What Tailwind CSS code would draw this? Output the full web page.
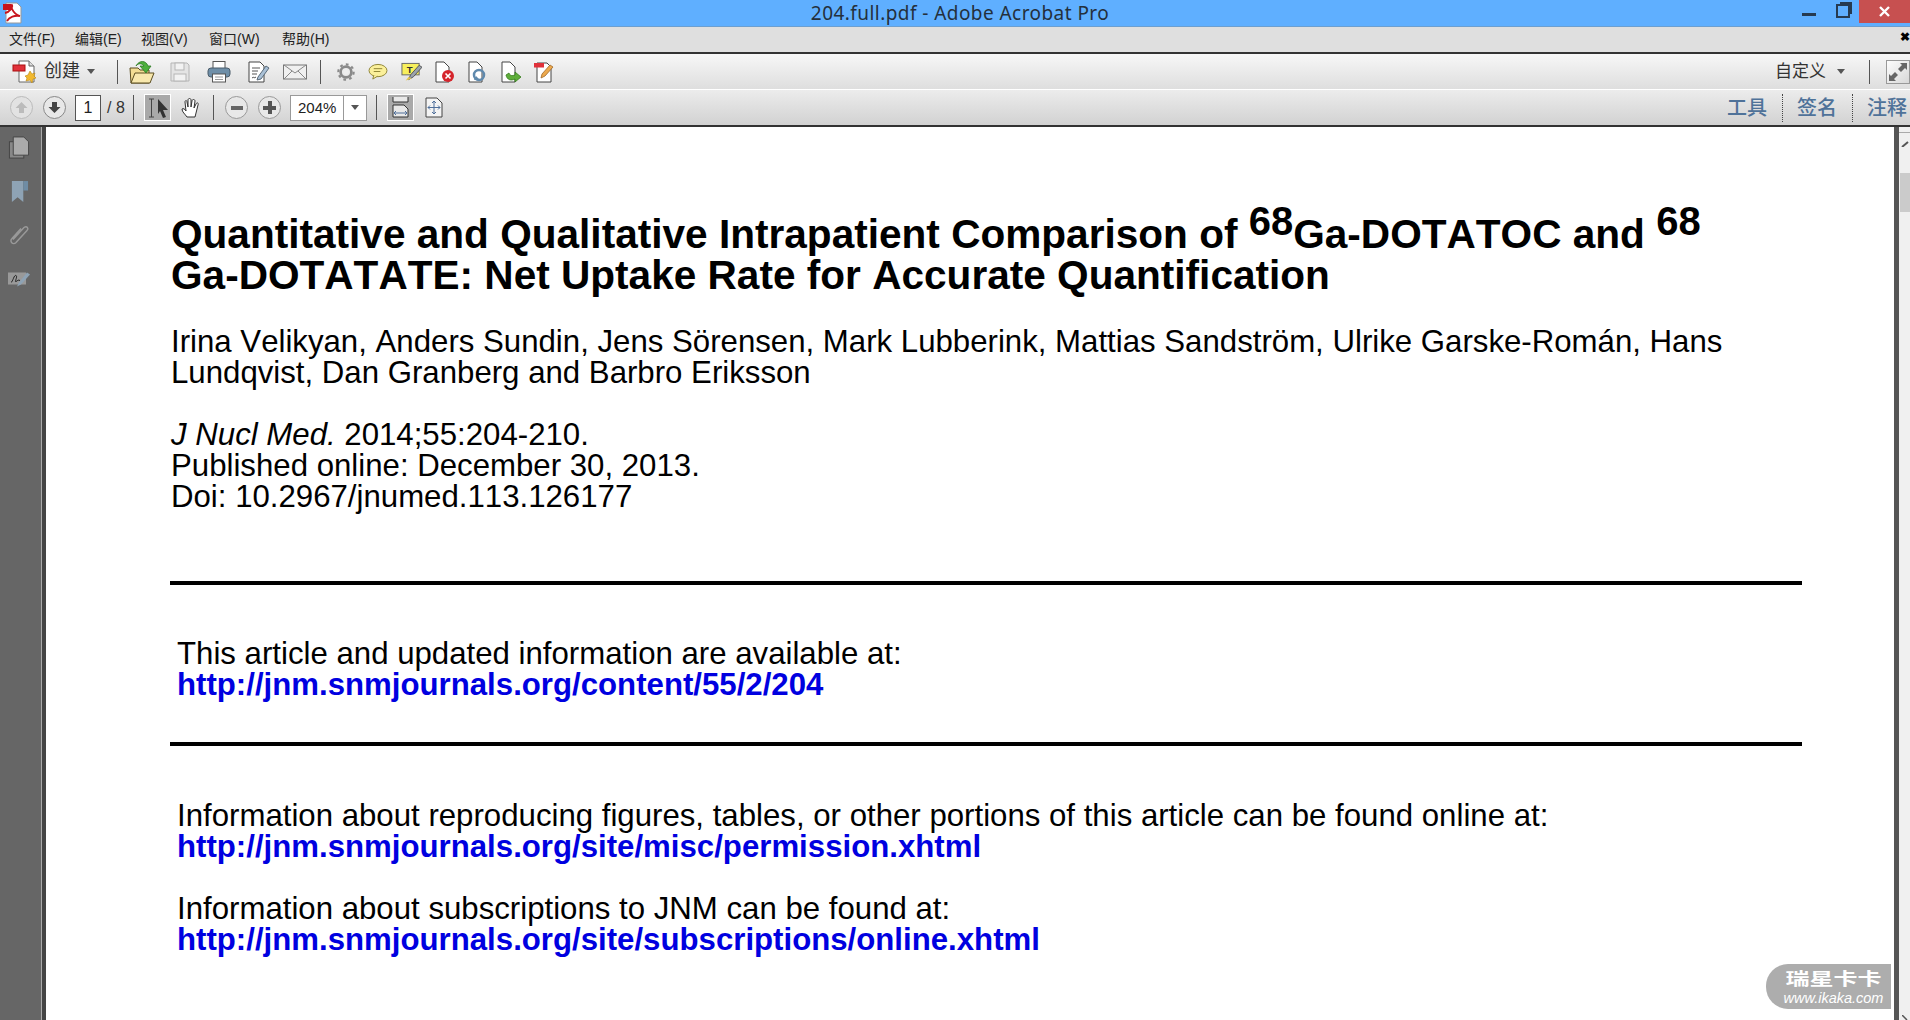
<!DOCTYPE html>
<html lang="zh-CN">
<head>
<meta charset="UTF-8">
<title>204.full.pdf - Adobe Acrobat Pro</title>
<script src="https://cdn.jsdelivr.net/npm/@tailwindcss/browser@4"></script>
</head>
<body class="w-[1910px] h-[1020px] overflow-hidden relative bg-white font-['Liberation_Sans','Noto_Sans_CJK_SC',sans-serif]">

<!-- title bar -->
<div class="h-[27px] bg-[#5fafff] border-b border-[#6c9fd0] flex items-center relative">
  <svg class="ml-[2px] w-[22px] h-[22px]" viewBox="0 0 22 22"><path d="M4 1h11l4 4v16H4z" fill="#fff" stroke="#999"/><path d="M3 11c5-1 8-6 7-8-2-1 0 9 8 11-5-1-11 1-13 5" fill="none" stroke="#c8141c" stroke-width="1.800"/><rect x="1" y="2" width="8" height="6" fill="#c8141c"/></svg>
  <div class="absolute left-[10px] right-0 text-center text-[19px] tracking-[0.44px] text-[#24303c] leading-[26px] font-['Noto_Sans',sans-serif]">204.full.pdf - Adobe Acrobat Pro</div>
  <div class="ml-auto flex items-center h-full">
    <div class="w-[14px] h-[3px] bg-[#263a50] mt-[3px] mr-[20px]"></div>
    <div class="relative w-[14px] h-[14px] border-2 border-[#263a50] mb-[4px] mr-[9px]"><div class="absolute -top-[4px] -right-[4px] w-[12px] h-[12px] border-t-2 border-r-2 border-[#263a50]"></div></div>
    <div class="w-[51px] h-[23px] self-start bg-[#c75050] flex items-center justify-center">
      <svg class="w-[11px] h-[11px]" viewBox="0 0 11 11"><path d="M1 1l9 9M10 1l-9 9" stroke="#fff" stroke-width="2.400"/></svg>
    </div>
  </div>
</div>

<!-- menu bar -->
<div class="h-[25px] bg-[#dfdfdf] flex items-center text-[14px] text-[#222] relative">
  <span class="ml-[9px] w-[66px]">文件(F)</span>
  <span class="w-[66px]">编辑(E)</span>
  <span class="w-[68px]">视图(V)</span>
  <span class="w-[73px]">窗口(W)</span>
  <span>帮助(H)</span>
  <span class="absolute right-0 top-[4px] text-[12px] font-bold text-black leading-none">✖</span>
</div>

<!-- toolbar 1 -->
<div class="h-[37px] border-t-2 border-[#333] bg-gradient-to-b from-[#f7f7f7] to-[#dedede] flex items-center relative">
  <svg class="ml-[12px] w-[25px] h-[25px]" viewBox="0 0 25 25"><path d="M7 2h10l5 5v16H7z" fill="#fff" stroke="#666"/><path d="M17 2v5h5" fill="#ddd" stroke="#666"/><rect x="1" y="6" width="12" height="6" fill="#e0313a" stroke="#a11"/><path d="M18 12l2 3 3-1-1 3 2 2-3 1-1 4-2-3-4 1 1-3-2-2 3-1z" fill="#f2b92e" stroke="#b58416" stroke-width=".6"/></svg>
  <span class="ml-[7px] text-[18px] text-[#333] w-[43px]">创建</span>
  <svg class="w-[8px] h-[5px]" viewBox="0 0 8 5"><path d="M0 0h8L4 5z" fill="#555"/></svg>
  <div class="ml-[22px] w-px h-[24px] bg-[#555]"></div>
  <svg class="ml-[11px] w-[26px] h-[26px]" viewBox="0 0 26 26"><path d="M1 9h8l2 2h9v13H2z" fill="#f3dd93" stroke="#5b4d1f"/><path d="M2 24l4-10h19l-4 10z" fill="#f8e8ad" stroke="#5b4d1f"/><path d="M7 7c3-6 10-6 12 0h3l-5 7-6-7h4c-2-3-6-3-8 0z" fill="#4caf3c" stroke="#2c7a22" stroke-width=".8"/></svg>
  <svg class="ml-[13px] w-[24px] h-[24px]" viewBox="0 0 24 24"><path d="M3 3h16l2 2v16H3z" fill="#e4e4e4" stroke="#b5b5b5"/><rect x="7" y="3" width="9" height="7" fill="#f2f2f2" stroke="#b5b5b5"/><rect x="6" y="14" width="12" height="7" fill="#f2f2f2" stroke="#b5b5b5"/></svg>
  <svg class="ml-[15px] w-[24px] h-[24px]" viewBox="0 0 24 24"><rect x="6" y="1.500" width="12" height="7" fill="#fff" stroke="#555"/><rect x="1" y="8" width="22" height="9" rx="3" fill="#6f8fa8" stroke="#4b5c6a"/><rect x="5.500" y="14" width="13" height="8" fill="#fff" stroke="#555"/><path d="M8 17h8M8 19.500h8" stroke="#999"/></svg>
  <svg class="ml-[15px] w-[24px] h-[24px]" viewBox="0 0 24 24"><path d="M3 2h11l4 4v16H3z" fill="#fff" stroke="#444"/><path d="M6 8h8M6 11h6M6 14h5M6 18c2-2 2 1 4-1" stroke="#555" fill="none"/><path d="M12 17l8-11 3 2-8 11-4 1z" fill="#a9c0d6" stroke="#5a6b7a"/></svg>
  <svg class="ml-[13px] w-[24px] h-[24px]" viewBox="0 0 24 24"><rect x=".5" y="5" width="23" height="14" fill="#f0f0f0" stroke="#777"/><path d="M1 5l11 8 11-8M1 19l8-8M23 19l-8-8" fill="none" stroke="#888"/></svg>
  <div class="ml-[13px] w-px h-[24px] bg-[#555]"></div>
  <svg class="ml-[16px] w-[18px] h-[18px]" viewBox="0 0 20 20"><circle cx="10" cy="10" r="6" fill="none" stroke="#8a8a8a" stroke-width="3"/><circle cx="10" cy="10" r="8.500" fill="none" stroke="#8a8a8a" stroke-width="2.400" stroke-dasharray="3 3.600"/><circle cx="10" cy="10" r="3" fill="#eee"/></svg>
  <svg class="ml-[13px] w-[20px] h-[17px]" viewBox="0 0 21 18"><ellipse cx="10.500" cy="8" rx="9.500" ry="6.500" fill="#fbf09a" stroke="#8c8232"/><path d="M6 13l-1 4 5-3" stroke="#8c8232" fill="#fbf09a"/><path d="M6 6h9M6 9h7" stroke="#8c8232"/></svg>
  <svg class="ml-[13px] w-[21px] h-[20px]" viewBox="0 0 22 20"><rect x="1" y="1" width="18" height="12" fill="#f7ef5c" stroke="#666"/><text x="6" y="11" font-size="10" font-weight="700" fill="#333" font-family="Liberation Sans">T</text><path d="M8 18l2-5 9-10 3 2-9 10z" fill="#9aa3ad" stroke="#555"/><path d="M5 19l3-4 3 2z" fill="#e3c64d"/></svg>
  <svg class="ml-[13px] w-[20px] h-[22px]" viewBox="0 0 20 22"><path d="M1 1h8l5 5v15H1z" fill="#fff" stroke="#444"/><circle cx="13" cy="15" r="6" fill="#d5252c"/><path d="M10.500 12.500l5 5M15.500 12.500l-5 5" stroke="#fff" stroke-width="1.600"/></svg>
  <svg class="ml-[13px] w-[18px] h-[22px]" viewBox="0 0 18 22"><path d="M1 1h8l5 5v15H1z" fill="#fff" stroke="#444"/><circle cx="11" cy="14" r="5" fill="none" stroke="#5f89ad" stroke-width="2.500"/><path d="M6 19l2-4 3 3z" fill="#5f89ad"/></svg>
  <svg class="ml-[15px] w-[20px] h-[22px]" viewBox="0 0 20 22"><path d="M1 1h8l5 5v15H1z" fill="#fff" stroke="#444"/><path d="M5 14c1 5 5 6 9 4v3l6-5-6-5v3c-3 1-5 1-6-2z" fill="#5fae3b" stroke="#337a1c" stroke-width=".8"/></svg>
  <svg class="ml-[13px] w-[20px] h-[22px]" viewBox="0 0 20 22"><path d="M3 2h10l4 4v15H3z" fill="#fff" stroke="#444"/><rect x="0" y="2" width="10" height="4.500" fill="#e0313a"/><path d="M7 17l1-4 8-9 3 2-8 9z" fill="#eda94d" stroke="#a0692a" stroke-width=".8"/></svg>

  <span class="absolute left-[1775px] text-[17px] text-[#333]">自定义</span>
  <svg class="absolute left-[1837px] w-[8px] h-[5px]" viewBox="0 0 8 5"><path d="M0 0h8L4 5z" fill="#555"/></svg>
  <div class="absolute left-[1869px] w-px h-[24px] bg-[#555]"></div>
  <div class="absolute left-[1886px] w-[24px] h-[24px] border border-[#999] bg-gradient-to-br from-[#fdfdfd] to-[#d8d8d8] flex items-center justify-center">
    <svg class="w-[20px] h-[20px]" viewBox="0 0 20 20"><path d="M19 1h-7l2 2-4 4 3 3 4-4 2 2z" fill="#666"/><path d="M1 19h7l-2-2 4-4-3-3-4 4-2-2z" fill="#666"/></svg>
  </div>
</div>

<!-- toolbar 2 -->
<div class="h-[38px] border-t border-white bg-gradient-to-b from-[#ececec] to-[#d2d2d2] border-b-2 border-b-[#333] flex items-center relative">
  <div class="ml-[10px] w-[23px] h-[23px] rounded-full border border-[#bbb] bg-[#e2e2e2] flex items-center justify-center">
    <svg class="w-[13px] h-[13px]" viewBox="0 0 13 13"><path d="M6.500 1l6 6H9v5H4V7H.5z" fill="#bbb"/></svg>
  </div>
  <div class="ml-[10px] w-[23px] h-[23px] rounded-full border border-[#888] bg-[#e8e8e8] flex items-center justify-center">
    <svg class="w-[13px] h-[13px]" viewBox="0 0 13 13"><path d="M6.500 12l6-6H9V1H4v5H.5z" fill="#444"/></svg>
  </div>
  <div class="ml-[9px] w-[26px] h-[26px] bg-white border border-[#555] text-[16px] text-[#222] flex items-center justify-center">1</div>
  <span class="ml-[6px] text-[16px] text-[#333] w-[22px] whitespace-nowrap">/ 8</span>
  <div class="ml-[4px] w-px h-[25px] bg-[#555]"></div>
  <div class="ml-[10px] w-[27px] h-[27px] bg-[#a9a9a9] border border-white flex items-center justify-center">
    <svg class="w-[22px] h-[20px]" viewBox="0 0 22 20"><path d="M2 1h5M2 19h5M4.500 1v18" stroke="#444" fill="none"/><path d="M11 1l10 11h-5l3 7-3 1-3-7-2 3z" fill="#333"/></svg>
  </div>
  <svg class="ml-[9px] w-[22px] h-[22px]" viewBox="0 0 22 22"><path d="M7 20c-2-3-5-5-5-8 1-1 3 0 4 2l-1-9c0-2 2-2 2 0l1 5V3c0-2 3-2 3 0v7l1-6c0-2 3-2 3 0l-1 7 2-4c1-2 3-1 2 1l-2 8-1 4z" fill="#fff" stroke="#333"/></svg>
  <div class="ml-[11px] w-px h-[25px] bg-[#555]"></div>
  <div class="ml-[11px] w-[23px] h-[23px] rounded-full border border-[#999] bg-[#e8e8e8] flex items-center justify-center"><div class="w-[12px] h-[4px] bg-[#666]"></div></div>
  <div class="ml-[10px] w-[23px] h-[23px] rounded-full border border-[#999] bg-[#e8e8e8] flex items-center justify-center relative"><div class="w-[13px] h-[4px] bg-[#555]"></div><div class="absolute w-[4px] h-[13px] bg-[#555]"></div></div>
  <div class="ml-[9px] w-[77px] h-[26px] bg-white border border-[#999] flex text-[15px] text-[#222]">
    <span class="w-[52px] pl-[7px] leading-[24px]">204%</span>
    <span class="flex-1 border-l border-[#999] flex items-center justify-center"><svg class="w-[8px] h-[5px]" viewBox="0 0 8 5"><path d="M0 0h8L4 5z" fill="#555"/></svg></span>
  </div>
  <div class="ml-[9px] w-px h-[25px] bg-[#555]"></div>
  <div class="ml-[10px] w-[27px] h-[27px] bg-[#a9a9a9] border border-white flex items-center justify-center">
    <svg class="w-[17px] h-[21px]" viewBox="0 0 17 21"><path d="M1 0v5h15V0M1 20V8h11l4 4v8z" fill="#e8e8e8" stroke="#333"/><path d="M2 16h13M2 16l2-2M2 16l2 2M15 16l-2-2M15 16l-2 2" stroke="#4f6f9a" fill="none"/></svg>
  </div>
  <svg class="ml-[11px] w-[18px] h-[21px]" viewBox="0 0 18 21"><path d="M1 1h11l5 5v14H1z" fill="#f4f4f4" stroke="#444"/><path d="M9 4v13M3 10.500h12M9 4l-2 2M9 4l2 2M9 17l-2-2M9 17l2-2M3 10.500l2-2M3 10.500l2 2M15 10.500l-2-2M15 10.500l-2 2" stroke="#4f6f9a" fill="none"/></svg>

  <div class="absolute left-[1727px] flex items-center h-full text-[20px] font-medium text-[#4f7299]">
    <span class="w-[40px]">工具</span>
    <span class="h-[28px] border-l border-dotted border-[#444] ml-[15px] mr-[14px]"></span>
    <span class="w-[40px]">签名</span>
    <span class="h-[28px] border-l border-dotted border-[#444] ml-[15px] mr-[14px]"></span>
    <span class="w-[40px]">注释</span>
  </div>
</div>

<!-- body -->
<div class="flex h-[893px]">
  <div class="w-[41px] bg-[#666] flex flex-col items-center pr-[3px] pt-[9px] gap-[21px] shrink-0">
    <svg class="w-[22px] h-[23px]" viewBox="0 0 22 24"><rect x="1" y="6" width="15" height="17" fill="#888" stroke="#444"/><path d="M5 1h11l5 5v14H5z" fill="#aaa" stroke="#444"/></svg>
    <svg class="w-[19px] h-[23px]" viewBox="0 0 20 24"><path d="M2 1h12v22l-6-5-6 5z" fill="#8ea3b5"/><rect x="14" y="1" width="5" height="10" fill="#6f8ca4"/></svg>
    <svg class="w-[22px] h-[23px]" viewBox="0 0 22 22"><path d="M5 15L16 3c3-2 5 1 3 3L8 18c-3 3-7-1-4-4l9-10" fill="none" stroke="#999" stroke-width="1.500"/></svg>
    <svg class="w-[24px] h-[23px]" viewBox="0 0 24 20"><rect x="1" y="3" width="18" height="12" fill="#999"/><path d="M4 13c2-1 3-8 5-7s-2 7 0 6 2-2 4-1" stroke="#222" fill="none"/><path d="M10 17l2-4 8-10 3 2-9 10z" fill="#8ea3b5"/></svg>
  </div>
  <div class="w-[5px] bg-[#444] border-l border-[#aaa] shrink-0"></div>

  <div class="w-[1848px] text-black pl-[124px] pr-[92px] pt-[87px] shrink-0 [font-kerning:none]">
    <h1 class="pl-px font-bold text-[40.6px] leading-[41px] whitespace-nowrap">Quantitative and Qualitative Intrapatient Comparison of <sup class="text-[40px] leading-none top-[-13px] align-baseline relative">68</sup>Ga-DOTATOC and <sup class="text-[40px] leading-none top-[-13px] align-baseline relative">68</sup><br>Ga-DOTATATE: Net Uptake Rate for Accurate Quantification</h1>
    <p class="pl-px mt-[30px] text-[31.2px] leading-[31px] whitespace-nowrap">Irina Velikyan, Anders Sundin, Jens Sörensen, Mark Lubberink, Mattias Sandström, Ulrike Garske-Román, Hans<br>Lundqvist, Dan Granberg and Barbro Eriksson</p>
    <p class="pl-px mt-[31px] text-[31.2px] leading-[31px]"><i>J Nucl Med.</i> 2014;55:204-210.<br>Published online: December 30, 2013.<br>Doi: 10.2967/jnumed.113.126177</p>
    <div class="mt-[69px] h-[4px] bg-black"></div>
    <div class="pl-[7px]">
      <p class="mt-[53px] text-[31.2px] leading-[31px]">This article and updated information are available at:<br><a class="font-bold text-[#0000e0]">http://jnm.snmjournals.org/content/55/2/204</a></p>
    </div>
    <div class="mt-[42px] h-[4px] bg-black"></div>
    <div class="pl-[7px] text-[31.2px] leading-[31px]">
      <p class="mt-[54px]">Information about reproducing figures, tables, or other portions of this article can be found online at:<br><a class="font-bold text-[#0000e0]">http://jnm.snmjournals.org/site/misc/permission.xhtml</a></p>
      <p class="mt-[31px]">Information about subscriptions to JNM can be found at:<br><a class="font-bold text-[#0000e0]">http://jnm.snmjournals.org/site/subscriptions/online.xhtml</a></p>
    </div>
  </div>

  <!-- scrollbar -->
  <div class="flex-1 border-l-[5px] border-[#555] bg-[#f0f0f0] relative">
    <div class="h-[6px] border-b border-[#aaa]"></div>
    <svg class="absolute top-[14px] left-[2px] w-[8px] h-[6px]" viewBox="0 0 8 6"><path d="M1 6l6-5" fill="none" stroke="#555" stroke-width="2"/></svg>
    <div class="absolute top-[46px] left-[1px] right-0 h-[39px] bg-[#cbcbcb]"></div>
    <svg class="absolute bottom-0 left-[3px] w-[6px] h-[5px]" viewBox="0 0 6 5"><path d="M0 0l5 5" fill="none" stroke="#555" stroke-width="1.500"/></svg>
  </div>
</div>

<!-- watermark -->
<div class="absolute left-[1766px] top-[964px] w-[125px] h-[45px] rounded-l-[22px] bg-[#adadad] text-white flex flex-col items-center leading-none pl-[10px]">
  <span class="text-[24px] font-bold mt-[4px] scale-y-[.7] h-[23px] whitespace-nowrap">瑞星卡卡</span>
  <span class="text-[14.500px] italic">www.ikaka.com</span>
</div>
</body>
</html>
